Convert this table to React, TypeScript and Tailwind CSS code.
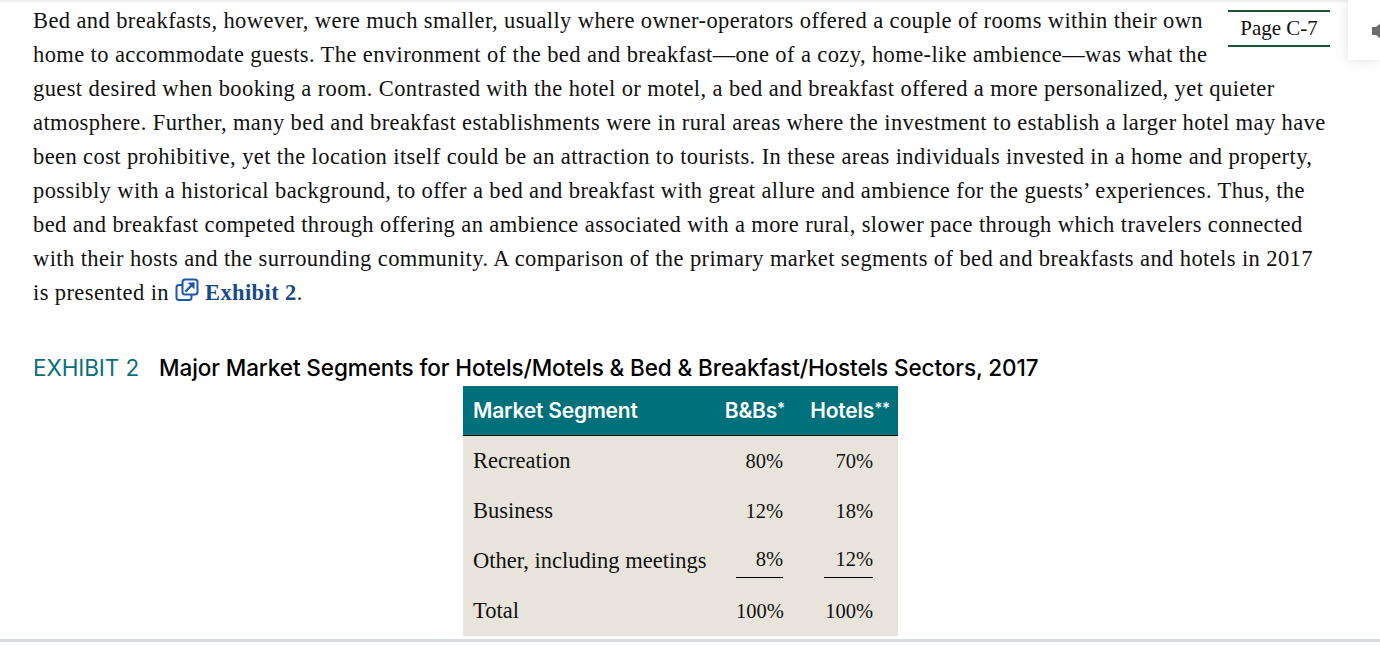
import React from "react";

const serif = "font-['Liberation_Serif','Times_New_Roman',serif]";
const sans = "font-['Inter','Open_Sans',sans-serif]";

const rows = [
  { label: "Recreation", bnb: "80%", hotel: "70%", rule: false },
  { label: "Business", bnb: "12%", hotel: "18%", rule: false },
  { label: "Other, including meetings", bnb: "8%", hotel: "12%", rule: true },
  { label: "Total", bnb: "100%", hotel: "100%", rule: false },
];

function PopupIcon() {
  return (
    <svg width="25" height="25" viewBox="0 0 25 25" className="mr-[5px] inline-block align-[-3px]">
      <rect x="1.5" y="7" width="15" height="15" rx="2.5" fill="white" stroke="#1f57a8" strokeWidth="2" />
      <rect x="7.5" y="1.5" width="15" height="15" rx="2.5" fill="white" stroke="#1f57a8" strokeWidth="2" />
      <path d="M11 13 L18.5 5.5" stroke="#1f57a8" strokeWidth="2.4" strokeLinecap="round" />
      <path d="M13.5 5 H19 V10.5 Z" fill="#1f57a8" stroke="#1f57a8" strokeWidth="1" strokeLinejoin="round" />
    </svg>
  );
}

function SpeakerTab() {
  return (
    <div className="absolute right-0 top-0 h-[60px] w-[32px] overflow-hidden bg-white shadow-[0_0_14px_rgba(0,0,0,0.12)]">
      <svg width="20" height="20" viewBox="0 0 20 20" className="absolute left-[24px] top-[21px]">
        <path d="M0 6 H4 L10 1 V19 L4 14 H0 Z" fill="#6b6b6b" />
      </svg>
    </div>
  );
}

export default function App() {
  return (
    <div className="relative h-[645px] w-[1380px] overflow-hidden bg-white">
      <div className="pointer-events-none absolute left-0 top-0 h-[4px] w-full bg-gradient-to-b from-[#ececec] to-transparent" />
      <SpeakerTab />

      <div className="pl-[33px] pr-[52px]">
        <div className={`${serif} pt-[4px] text-[22.5px] leading-[34px] tracking-[0.4px] text-[#111]`}>
          <div className="float-right ml-[20px] mr-[-2px] mt-[6px] w-[102px] border-y-2 border-[#1e5233] py-[1px] text-center text-[21px] leading-[31px] tracking-normal">
            Page C-7
          </div>
          <p>
            Bed and breakfasts, however, were much smaller, usually where owner-operators offered a couple of rooms
            within their own home to accommodate guests. The environment of the bed and breakfast—one of a cozy,
            home-like ambience—was what the guest desired when booking a room. Contrasted with the hotel or motel, a
            bed and breakfast offered a more personalized, yet quieter atmosphere. Further, many bed and breakfast
            establishments were in rural areas where the investment to establish a larger hotel may have been cost
            prohibitive, yet the location itself could be an attraction to tourists. In these areas individuals
            invested in a home and property, possibly with a historical background, to offer a bed and breakfast with
            great allure and ambience for the guests’ experiences. Thus, the bed and breakfast competed through
            offering an ambience associated with a more rural, slower pace through which travelers connected with
            their hosts and the surrounding community. A comparison of the primary market segments of bed and
            breakfasts and hotels in 2017 is presented in{" "}
            <PopupIcon />
            <span className="font-bold text-[#1a4a8a]">Exhibit 2</span>.
          </p>
        </div>

        <h2 className={`${sans} mt-[44px] flex items-baseline text-[22.5px] leading-[28px] tracking-[-0.1px]`}>
          <span className="mr-[20px] text-[#0b6f7a]">EXHIBIT 2</span>
          <span className="font-medium text-black">
            Major Market Segments for Hotels/Motels &amp; Bed &amp; Breakfast/Hostels Sectors, 2017
          </span>
        </h2>

        <div className="mx-auto mt-[4px] w-[435px] bg-[#e8e4dc]">
          <div
            className={`${sans} flex h-[50px] items-center border-b border-black bg-[#00717a] text-[21px] font-semibold tracking-[-0.2px] text-white`}
          >
            <div className="flex-1 pl-[10px]">Market Segment</div>
            <div className="text-right">
              B&amp;Bs<span className="relative top-[-5px] text-[15px]">*</span>
            </div>
            <div className="w-[113px] pr-[8px] text-right">
              Hotels<span className="relative top-[-5px] text-[15px]">**</span>
            </div>
          </div>
          {rows.map((r) => (
            <div key={r.label} className={`${serif} flex h-[50px] items-center text-[22.5px] text-[#111]`}>
              <div className="flex-1 pl-[10px]">{r.label}</div>
              <div className="pr-[41px] text-[20.5px]">
                <span className={`inline-block w-[47px] text-right ${r.rule ? "border-b border-black pb-[2px]" : ""}`}>
                  {r.bnb}
                </span>
              </div>
              <div className="pr-[25px] text-[20.5px]">
                <span className={`inline-block w-[49px] text-right ${r.rule ? "border-b border-black pb-[2px]" : ""}`}>
                  {r.hotel}
                </span>
              </div>
            </div>
          ))}
        </div>
      </div>

      <div className="mt-[3px] h-[3px] w-full bg-[#d5dfe1]" />
    </div>
  );
}
